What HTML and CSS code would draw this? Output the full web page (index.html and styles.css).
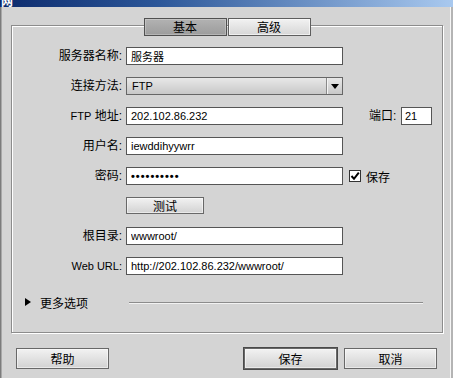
FILE: index.html
```html
<!DOCTYPE html>
<html lang="zh-CN">
<head>
    <meta charset="UTF-8">
    <title>站点设置</title>
    <link rel="stylesheet" href="styles.css">
</head>
<body>

<div class="window">
    <div class="titlebar"><span class="title">网</span></div>

    <div class="group">
        <div class="tabs">
            <div class="tab active">基本</div>
            <div class="tab">高级</div>
        </div>

        <div class="form">
            <label for="name">服务器名称:</label>
            <input class="field" type="text" id="name" value="服务器">
            <div></div>

            <label>连接方法:</label>
            <div class="select">
                <span class="select-text">FTP</span>
                <span class="select-arrow"><i></i></span>
            </div>
            <div></div>

            <label for="host"><span class="en">FTP</span> 地址:</label>
            <input class="field" type="text" id="host" value="202.102.86.232">
            <div class="port">
                <label for="port">端口:</label>
                <input class="field port-field" type="text" id="port" value="21">
            </div>

            <label for="user">用户名:</label>
            <input class="field" type="text" id="user" value="iewddihyywrr">
            <div></div>

            <label for="pass">密码:</label>
            <input class="field pass" type="text" id="pass" value="••••••••••">
            <div class="remember">
                <span class="checkbox">
                    <svg width="10" height="10" viewBox="0 0 10 10"><path d="M1.5 5 L4 7.8 L8.8 1.6" fill="none" stroke="#000" stroke-width="2"/></svg>
                </span>
                <span>保存</span>
            </div>

            <div></div>
            <div><button class="btn test">测试</button></div>
            <div></div>

            <label for="root">根目录:</label>
            <input class="field" type="text" id="root" value="wwwroot/">
            <div></div>

            <label for="url"><span class="en">Web URL:</span></label>
            <input class="field" type="text" id="url" value="http://202.102.86.232/wwwroot/">
            <div></div>
        </div>

        <div class="more">
            <span class="more-arrow"></span>
            <span class="more-text">更多选项</span>
            <span class="rule"></span>
        </div>
    </div>

    <div class="actions">
        <button class="btn">帮助</button>
        <div class="actions-right">
            <button class="btn default">保存</button>
            <button class="btn">取消</button>
        </div>
    </div>
</div>

</body>
</html>
```

FILE: styles.css
```css
* {
    box-sizing: border-box;
}
body {
    margin: 0;
    font-family: "Liberation Sans", "Noto Sans CJK SC", sans-serif;
    font-size: 11px;
    color: #000000;
    background-color: #d4d4d4;
}
.window {
    width: 453px;
    height: 378px;
    background-color: #d4d4d4;
    box-shadow: inset 1px 0 0 #7c7c7c, inset 2px 0 0 #a8a8a8,
                inset -2px 0 0 #b4b4b4, inset -3px 0 0 #f6f6f6;
    overflow: hidden;
}
.titlebar {
    height: 7px;
    overflow: hidden;
    background: linear-gradient(90deg, #0c2a6c 0%, #2c5799 35%, #a9c9ef 100%);
}
.title {
    display: block;
    margin: -6px 0 0 1px;
    line-height: 13px;
    font-size: 12px;
    font-weight: bold;
    color: #ffffff;
    font-family: "Noto Sans CJK SC", sans-serif;
}
.group {
    margin: 18px 10px 0 11px;
    height: 308px;
    border: 1px solid #8c8c8c;
    box-shadow: 1px 1px 0 #ffffff, inset 1px 1px 0 #ffffff;
}
.tabs {
    display: flex;
    justify-content: center;
    gap: 1px;
    margin-top: -8px;
}
.tab {
    width: 83px;
    height: 18px;
    border: 1px solid #5e5e5e;
    background: linear-gradient(#f2f2f2, #d6d6d6);
    box-shadow: inset 0 0 0 1px rgba(255,255,255,0.6);
    font-family: "Noto Sans CJK SC", sans-serif;
    font-size: 12px;
    line-height: 16px;
    text-align: center;
}
.tab.active {
    border-color: #505050;
    background: linear-gradient(#b2b2b2, #9c9c9c);
    box-shadow: inset 0 0 0 1px rgba(255,255,255,0.25);
}
.form {
    display: grid;
    grid-template-columns: 110px 217px 1fr;
    grid-auto-rows: 18px;
    column-gap: 4px;
    row-gap: 12px;
    margin-top: 11px;
}
.form label {
    font-size: 12px;
    line-height: 18px;
    text-align: right;
}
.en {
    font-size: 11px;
}
.field {
    display: block;
    width: 100%;
    height: 18px;
    margin: 0;
    padding: 0 4px;
    border: 1px solid #555555;
    background-color: #ffffff;
    font-family: "Liberation Sans", "Noto Sans CJK SC", sans-serif;
    font-size: 11px;
    color: #000000;
    outline: none;
}
.field.pass {
    font-size: 11px;
    font-weight: bold;
    letter-spacing: 1px;
}
.select {
    display: flex;
    height: 18px;
    border: 1px solid #666666;
    background: linear-gradient(#e8e8e8, #c8c8c8);
}
.select-text {
    flex: 1;
    padding-left: 5px;
    line-height: 16px;
}
.select-arrow {
    width: 16px;
    border-left: 1px solid #8a8a8a;
    box-shadow: inset 1px 0 0 #f4f4f4;
    display: flex;
    align-items: center;
    justify-content: center;
}
.select-arrow i {
    display: block;
    width: 0;
    height: 0;
    margin-left: 1px;
    border-left: 4px solid transparent;
    border-right: 4px solid transparent;
    border-top: 5px solid #000000;
}
.port {
    display: flex;
    align-items: center;
    padding-left: 22px;
}
.port label {
    width: 32px;
    text-align: left;
}
.port-field {
    width: 31px;
    padding: 0 3px;
}
.remember {
    display: flex;
    align-items: center;
    gap: 5px;
    padding-left: 2px;
    font-size: 12px;
}
.checkbox {
    width: 12px;
    height: 12px;
    border: 1px solid #333333;
    background-color: #ffffff;
    display: flex;
    align-items: center;
    justify-content: center;
}
.btn {
    display: block;
    height: 21px;
    width: 93px;
    margin: 0;
    padding: 0;
    border: 1px solid #686868;
    background: linear-gradient(#f2f2f2, #d2d2d2);
    box-shadow: inset 0 0 0 1px rgba(255,255,255,0.5);
    font-family: "Noto Sans CJK SC", sans-serif;
    font-size: 12px;
    color: #000000;
}
.btn.test {
    width: 78px;
    height: 17px;
    line-height: 14px;
}
.btn.default {
    box-shadow: 0 0 0 1px #4a4a4a, inset 0 0 0 1px rgba(255,255,255,0.5);
}
.more {
    display: flex;
    align-items: center;
    height: 14px;
    margin-top: 20px;
    padding-left: 13px;
}
.more-arrow {
    width: 0;
    height: 0;
    border-left: 6px solid #000000;
    border-top: 4.5px solid transparent;
    border-bottom: 4.5px solid transparent;
}
.more-text {
    margin-left: 9px;
    font-size: 12px;
}
.rule {
    flex: 1;
    height: 1px;
    margin: 0 19px 0 41px;
    background-color: #8c8c8c;
    box-shadow: 0 1px 0 #f2f2f2;
}
.actions {
    display: flex;
    justify-content: space-between;
    margin-top: 15px;
    padding: 0 16px;
}
.actions-right {
    display: flex;
    gap: 7px;
}
```
